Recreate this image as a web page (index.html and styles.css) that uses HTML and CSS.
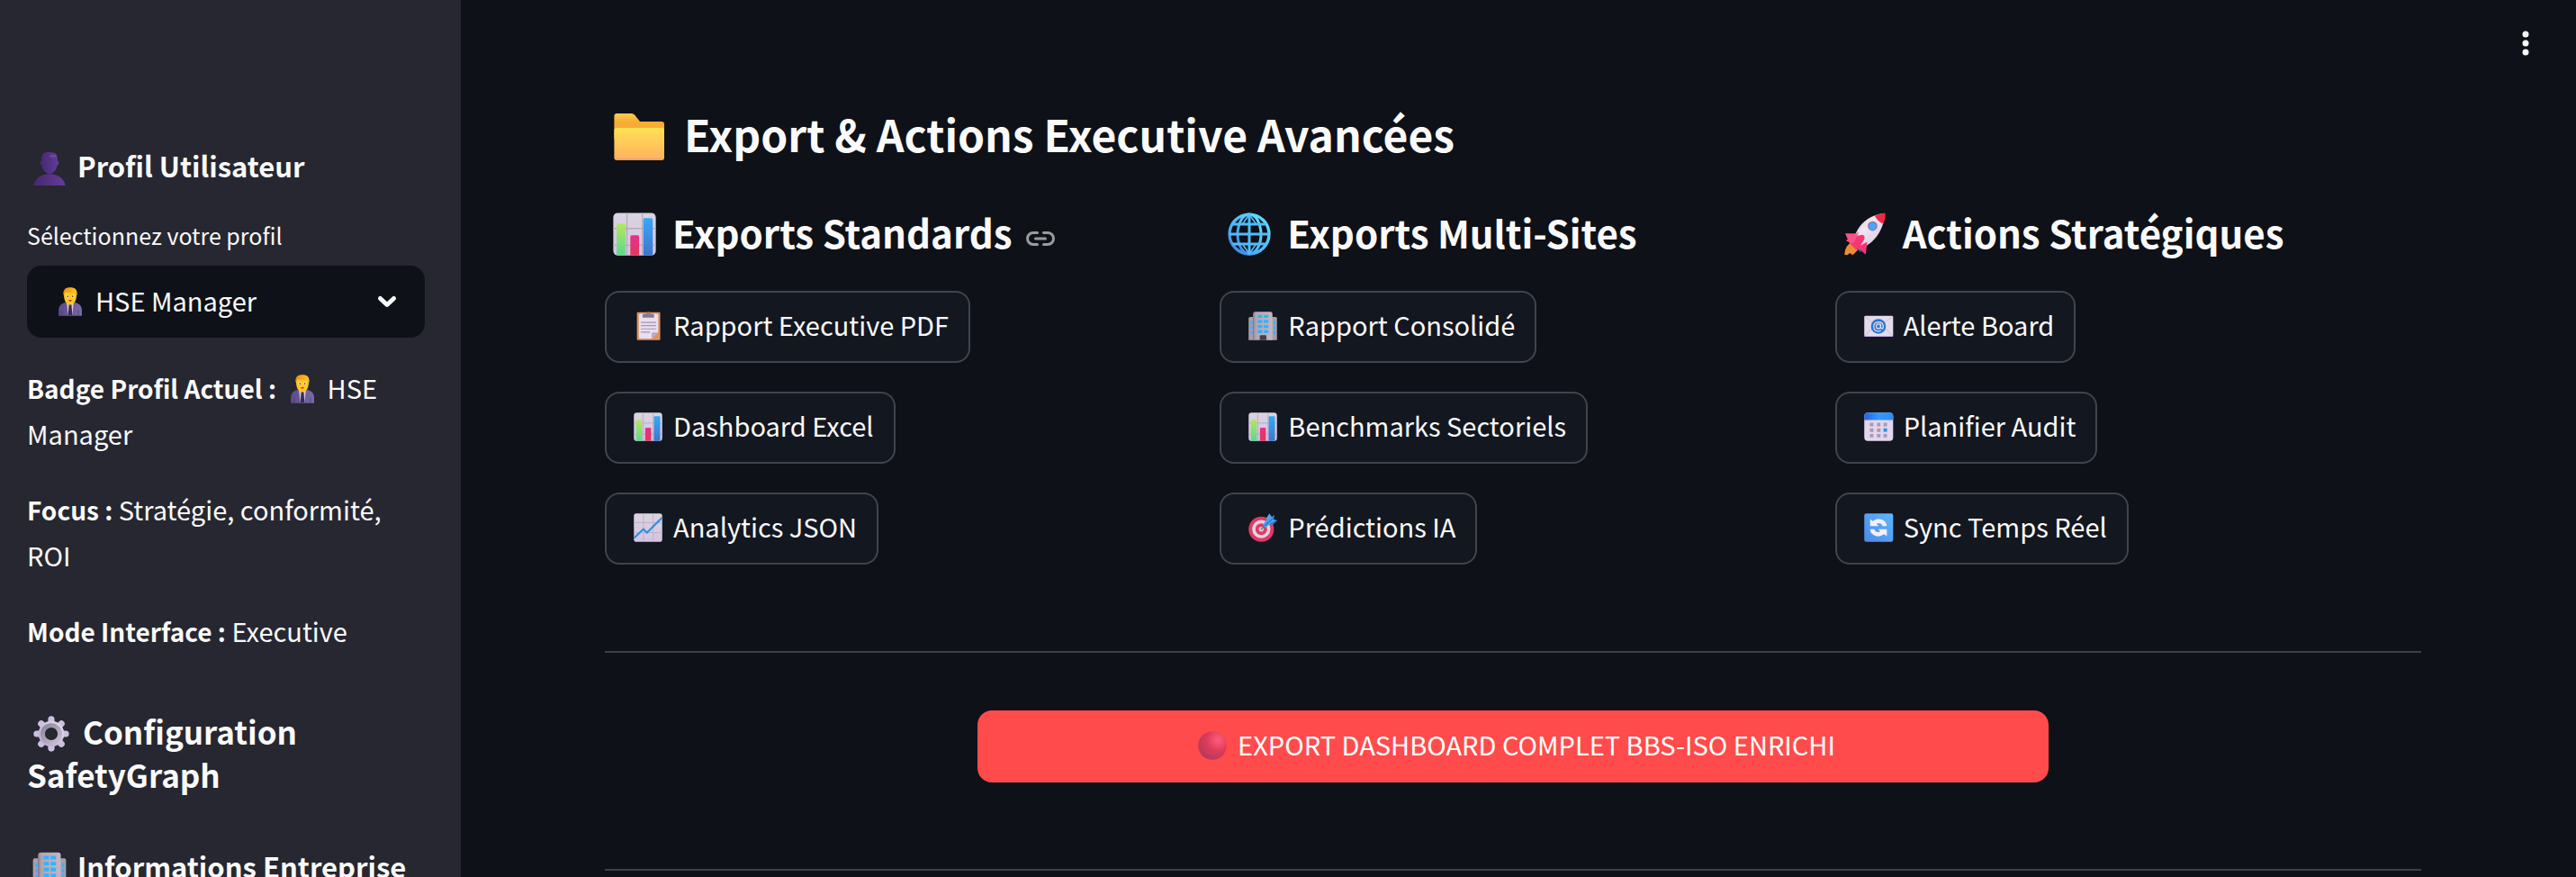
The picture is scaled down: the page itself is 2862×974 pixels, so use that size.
FILE: index.html
```html
<!DOCTYPE html>
<html lang="fr">
<head>
<meta charset="utf-8">
<title>SafetyGraph</title>
<link rel="stylesheet" href="styles.css">
</head>
<body>
<svg class="sprite" aria-hidden="true">
  <defs>
    <linearGradient id="g-person" x1="0" y1="0" x2="1" y2="0"><stop offset="0" stop-color="#46286e"/><stop offset="1" stop-color="#633d98"/></linearGradient>
    <linearGradient id="g-panel" x1="0" y1="0" x2="0" y2="1"><stop offset="0" stop-color="#dad4df"/><stop offset="1" stop-color="#d5c4e6"/></linearGradient>
    <linearGradient id="g-green" x1="0" y1="0" x2="0" y2="1"><stop offset="0" stop-color="#b4e75c"/><stop offset="1" stop-color="#5bd98c"/></linearGradient>
    <linearGradient id="g-pink" x1="0" y1="0" x2="0" y2="1"><stop offset="0" stop-color="#ea2e8c"/><stop offset="1" stop-color="#e03a5c"/></linearGradient>
    <linearGradient id="g-blue" x1="0" y1="0" x2="0" y2="1"><stop offset="0" stop-color="#35a8fa"/><stop offset="1" stop-color="#3f76ca"/></linearGradient>
    <linearGradient id="g-folder-back" x1="0" y1="0" x2="0" y2="1"><stop offset="0" stop-color="#ffcb50"/><stop offset=".35" stop-color="#f8ab35"/></linearGradient>
    <linearGradient id="g-folder" x1="0" y1="0" x2="0" y2="1"><stop offset="0" stop-color="#ffe152"/><stop offset="1" stop-color="#ffb160"/></linearGradient>
    <linearGradient id="g-globe" x1="1" y1="0" x2="0" y2="1"><stop offset="0" stop-color="#62e4ff"/><stop offset=".6" stop-color="#4db5fa"/><stop offset="1" stop-color="#3e7ae0"/></linearGradient>
    <linearGradient id="g-gear" x1="1" y1="0" x2="0" y2="1"><stop offset="0" stop-color="#e0dbe8"/><stop offset="1" stop-color="#bda6d6"/></linearGradient>
    <linearGradient id="g-gear-ring" x1="0" y1="0" x2="1" y2="1"><stop offset="0" stop-color="#8e869a"/><stop offset="1" stop-color="#c9bfd4"/></linearGradient>
    <linearGradient id="g-suit" x1="0" y1="0" x2="1" y2="0"><stop offset="0" stop-color="#5a4a88"/><stop offset="1" stop-color="#7a6aa6"/></linearGradient>
    <linearGradient id="g-hair" x1="0" y1="0" x2="1" y2="0"><stop offset="0" stop-color="#f08c10"/><stop offset="1" stop-color="#ffc32a"/></linearGradient>
    <linearGradient id="g-tower" x1="0" y1="0" x2="1" y2="0"><stop offset="0" stop-color="#9d929f"/><stop offset=".2" stop-color="#b3a8b5"/><stop offset="1" stop-color="#c2b6c6"/></linearGradient>
    <linearGradient id="g-rocket" x1="0" y1="0" x2="1" y2="1"><stop offset="0" stop-color="#c9bdcf"/><stop offset=".4" stop-color="#efe6f0"/><stop offset="1" stop-color="#d2c0de"/></linearGradient>
    <linearGradient id="g-cal" x1="0" y1="0" x2="1" y2="0"><stop offset="0" stop-color="#2b62dc"/><stop offset=".5" stop-color="#3598fa"/><stop offset="1" stop-color="#2f8cf4"/></linearGradient>
    <linearGradient id="g-sync" x1="1" y1="0" x2="0" y2="1"><stop offset="0" stop-color="#5cb8ff"/><stop offset="1" stop-color="#4f88e6"/></linearGradient>
    <radialGradient id="g-ball" cx=".7" cy=".3" r=".8"><stop offset="0" stop-color="#ff5d7e"/><stop offset=".5" stop-color="#de3c58"/><stop offset="1" stop-color="#b03a5c"/></radialGradient>
  </defs>
  <symbol id="person" viewBox="0 0 32 32">
    <path d="M9.300 8C9.300 4 10.800 2.200 16 2.200S22.700 4 22.700 8v1.700c.8 0 1.200.6 1.200 1.700s-.4 1.700-1.300 1.800C21.800 17.500 19.500 20.500 16 20.500s-5.800-3-6.600-7.300c-.9-.1-1.300-.7-1.300-1.800s.4-1.700 1.200-1.700z" fill="url(#g-person)"/>
    <path d="M2.500 30.500C4 24.500 8.500 20.800 16 20.800S28 24.500 29.500 30.500z" fill="url(#g-person)"/>
    <ellipse cx="19" cy="5.500" rx="3" ry="1" fill="#704aa5"/>
  </symbol>
  <symbol id="manager" viewBox="0 0 32 32">
    <path d="M4.500 30v-5c0-6 4-8.500 11.500-8.500S27.500 19 27.500 25v5z" fill="url(#g-suit)"/>
    <path d="M12.500 16.500h7L18 30h-4z" fill="#dccde4"/>
    <path d="M14.800 18.500h2.400l1 11.500h-4.400z" fill="#3a2b57"/>
    <path d="M8 24.500V30m16-5.500V30" stroke="#4c3d78" stroke-width=".7"/>
    <path d="M9.800 9c0-4 2-6 6.200-6s6.200 2 6.200 6c0 5.500-2 10-6.200 10s-6.200-4.500-6.200-10z" fill="#ffc91f"/>
    <path d="M9.200 10C8.800 4 11 2 16 2s7.200 2 6.800 8l-1.500-3.500c-3 .6-7.600.6-10.600 0z" fill="url(#g-hair)"/>
    <circle cx="13.300" cy="10.600" r="1.300" fill="#fff"/><circle cx="18.700" cy="10.600" r="1.300" fill="#fff"/>
    <circle cx="13.500" cy="10.700" r=".8" fill="#53306b"/><circle cx="18.500" cy="10.700" r=".8" fill="#53306b"/>
    <path d="M14.200 14.800q1.800-1 3.600 0-1.800 1.600-3.600 0z" fill="#d4143c"/>
  </symbol>
  <symbol id="gear" viewBox="0 0 32 32">
    <path d="M16 4.800V8M16 24v3.200M4.800 16H8M24 16h3.200M8.200 8.200 10.500 10.500M21.500 21.500l2.300 2.300M23.800 8.200 21.500 10.500M10.500 21.500l-2.300 2.300" stroke="#cdbfe0" stroke-width="5" stroke-linecap="round"/>
    <circle cx="16" cy="16" r="7.700" fill="none" stroke="url(#g-gear)" stroke-width="4.500"/>
    <circle cx="16" cy="16" r="6.600" fill="none" stroke="url(#g-gear-ring)" stroke-width="3.300"/>
  </symbol>
  <symbol id="building" viewBox="0 0 32 32">
    <path d="M2 30V8.500q0-1.500 1.500-1.500H8v23zM24 30V7h4.500Q30 7 30 8.500V30z" fill="#a99dac"/>
    <path d="M6.500 30V4q0-2 2-2h15q2 0 2 2v26z" fill="url(#g-tower)"/>
    <path d="M6.700 30V4" stroke="#85788c"/>
    <g fill="#33b4fa"><path d="M11 5h4.500v3H11zM17 5h4.500v3H17zM11 10h4.500v3H11zM17 10h4.500v3H17zM11 15h4.500v3H11zM17 15h4.500v3H17zM11 20h4.500v3H11zM17 20h4.500v3H17zM4 11h2v3H4zM4 16h2v3H4zM4 21h2v3H4zM26.500 11h2v3h-2zM26.500 16h2v3h-2zM26.500 21h2v3h-2z"/></g>
    <path d="M13 30v-4q0-1 1-1h4.500q1 0 1 1v4z" fill="#4a3b52"/>
  </symbol>
  <symbol id="folder" viewBox="0 0 32 32">
    <path d="M2.200 4.500Q2.200 3 3.700 3h8.100q1 0 1.700.8l3 3.700h12q1.500 0 1.500 1.500v8H2.200z" fill="url(#g-folder-back)"/>
    <path d="M2.200 12.500q0-1.500 1.500-1.500h24.800q1.500 0 1.500 1.500v15q0 1.500-1.500 1.500H3.700q-1.500 0-1.500-1.500z" fill="url(#g-folder)"/>
    <path d="M3 28.500h26" stroke="#ef9870" stroke-width=".8"/>
  </symbol>
  <symbol id="bars" viewBox="0 0 32 32">
    <rect x="2" y="2" width="28" height="28" rx="3" fill="url(#g-panel)"/>
    <path d="M11 2v28M21.200 2v28M2 12.300h28M2 23.300h28" stroke="#b5acba" stroke-width=".8"/>
    <path d="M4.200 30V10q0-1 1-1H9q1 0 1 1v20z" fill="url(#g-green)"/>
    <path d="M13.200 30V17.800q0-1 1-1H18q1 0 1 1V30z" fill="url(#g-pink)"/>
    <path d="M21.800 30V6.500q0-1 1-1H27q1 0 1 1V30z" fill="url(#g-blue)"/>
  </symbol>
  <symbol id="trend" viewBox="0 0 32 32">
    <rect x="2" y="2" width="28" height="28" rx="2.500" fill="url(#g-panel)"/>
    <path d="M11.500 2v28M21 2v28M2 11h28M2 21h28" stroke="#bab0c0" stroke-width=".8"/>
    <path d="M2 26.500 11.300 17.500 15 21 30 6" fill="none" stroke="#2e8fe0" stroke-width="1.900"/>
  </symbol>
  <symbol id="clipboard" viewBox="0 0 32 32">
    <rect x="5" y="2.500" width="23" height="27.500" rx="1" fill="#dd9560"/>
    <path d="M7 5.500Q7 4 8.500 4h16Q26 4 26 5.500V22l-6.500 6.500h-11Q7 28.500 7 27z" fill="#e8dff1"/>
    <path d="M26 22.500h-5q-1.500 0-1.500 1.500v4.500z" fill="#bda9c4"/>
    <path d="M9 12.500h15M9 15.700h15M9 18.900h15M9 22.100h9" stroke="#a297aa" stroke-width="1"/>
    <path d="M10.500 7.800V5.500q0-1.500 1.500-1.500h2.300q.2-2.300 2-2.300t2 2.300h2.200Q22 4 22 5.500v2.300z" fill="#867a8d"/>
    <circle cx="16.300" cy="4" r=".8" fill="#c07f52"/>
  </symbol>
  <symbol id="globe" viewBox="0 0 32 32">
    <g fill="none" stroke="url(#g-globe)" stroke-width="1.800">
      <circle cx="16" cy="16" r="13" stroke-width="2"/>
      <ellipse cx="16" cy="16" rx="7.700" ry="13"/>
      <g stroke="#50bdfb">
        <path d="M5 9.500h22M3 16h26M5 22.500h22M16 3v26"/>
        <path d="M16 3 11.500 9.500M16 3l4.500 6.500M16 29l-4.500-6.500M16 29l4.500-6.500" stroke-width="1"/>
      </g>
    </g>
  </symbol>
  <symbol id="target" viewBox="0 0 32 32">
    <circle cx="14.500" cy="17.500" r="12.500" fill="#e23960"/>
    <circle cx="14.500" cy="17.500" r="9" fill="#e0d3e8"/>
    <circle cx="14.500" cy="17.500" r="5.800" fill="#e23960"/>
    <circle cx="14.500" cy="17.500" r="2.500" fill="#d7bfd6"/>
    <path d="M14.500 17.500 23 9" stroke="#75708a" stroke-width="1.300"/>
    <path d="M16 13 20 8 19.500 6.500 22.500 2 25 5.500 27.500 3.500 26.500 7.500 30 9 25.500 13 23.500 12.500 18.500 16z" fill="#43a8f2"/>
    <path d="M18 14 27 6M23.500 12.500 27 10.500 30 9" stroke="#2c72d4" stroke-width="1.200" fill="none"/>
  </symbol>
  <symbol id="rocket" viewBox="0 0 32 32">
    <path d="M7.500 21.500Q3 23 2.500 29.500l2 .3 1.500-1.300 2 1.300 5-5z" fill="#ef8b32"/>
    <path d="M7 22.500 13 28l2-2-6-6z" fill="#3a4a94"/>
    <path d="M11.500 15.500 3 15.500 6 18 3.500 20.500 8 22z" fill="#fa4f86"/>
    <path d="M8 22C10 11 17 3.500 29 2.200 28.500 14 22 22 12.500 26z" fill="url(#g-rocket)"/>
    <path d="M22.500 4Q26 2.200 28.500 2.200q1 0 1 1.200-.2 3.200-1.400 5.800Q24.500 8 22.500 4z" fill="#ee2a46"/>
    <path d="M6.500 22.500Q8 16.500 14.500 16.500 16.300 17 15.500 19.500L13 23.500 17.500 21 16.500 29.500 12 25.500 10 26z" fill="#f63674"/>
    <path d="M3 15.500 8.500 17 12 14.500 9 21.500 6 22.500z" fill="#fb5288"/>
    <circle cx="21" cy="10.700" r="3.200" fill="#8a7a92"/>
    <circle cx="21" cy="10.900" r="2.400" fill="#4aa4fa"/>
  </symbol>
  <symbol id="email" viewBox="0 0 32 32">
    <rect x="2" y="6" width="28.500" height="20.500" rx="1" fill="#e4dcec"/>
    <path d="M2.500 26 12 16M30 26l-9.500-10M2.500 6.500 11 13.500M30 6.500 21.500 13.500" stroke="#c3b5d4" stroke-width=".7"/>
    <path d="M2.500 26.200h27.500" stroke="#cdabef" stroke-width=".7"/>
    <circle cx="16" cy="16.400" r="7.400" fill="#2e76cf"/>
    <g fill="none" stroke="#dfe3f5" stroke-width="1.100"><circle cx="16" cy="16.400" r="2.200"/><path d="M18.200 14v3.200q0 1.500 1.300 1.500t1.300-2.300q-.4-4.300-4.800-4.300-4.500.2-4.700 4.500.2 4.300 4.700 4.600 1.500 0 2.500-.6"/></g>
  </symbol>
  <symbol id="calendar" viewBox="0 0 32 32">
    <rect x="2" y="2" width="28.500" height="28" rx="3.500" fill="#e3d6ee"/>
    <path d="M2 9.300V5.500Q2 2 5.500 2H27q3.500 0 3.500 3.500v3.800z" fill="url(#g-cal)"/>
    <path d="M7.500 12H11v3.500H7.500zM14.500 12H18v3.500h-3.500zM21 12h3.500v3.500H21zM7.500 17.500H11V21H7.500zM14.500 17.500H18V21h-3.500zM7.500 23H11v3.500H7.500zM14.500 23H18v3.500h-3.500zM21 23h3.500v3.500H21z" fill="#a99caf"/>
    <path d="M21 17.500h3.500V21H21z" fill="#2692f2"/>
  </symbol>
  <symbol id="sync" viewBox="0 0 32 32">
    <rect x="2" y="2" width="28.500" height="28" rx="2" fill="url(#g-sync)"/>
    <path d="M7.800 7.500 10.500 9.500Q17 5 22.500 10q1.500 1.800 1.700 4.500h-4.100q-1.600-4.200-6-2.300l2.200 2.300H7.800zM24.300 24.500l-2.700-2Q15 27 9.500 22q-1.500-1.800-1.700-4.500h4.100q1.600 4.200 6 2.300l-2.200-2.300h8.600z" fill="#f4eefc"/>
  </symbol>
  <symbol id="ball" viewBox="0 0 32 32"><circle cx="16" cy="16" r="14" fill="url(#g-ball)"/></symbol>
</svg>

<div class="app">
  <aside class="sidebar">
    <h3 class="side-title"><svg class="emoji"><use href="#person"/></svg>Profil Utilisateur</h3>
    <label class="field-label" for="profil">Sélectionnez votre profil</label>
    <div class="select-box">
      <select id="profil" class="select"><option>HSE Manager</option></select>
      <svg class="emoji select-emoji"><use href="#manager"/></svg>
      <svg class="chevron" viewBox="0 0 24 16" aria-hidden="true"><path d="M4.500 4.500 12 11.500l7.500-7"/></svg>
    </div>
    <div class="profile">
      <p><strong>Badge Profil Actuel :</strong> <svg class="emoji"><use href="#manager"/></svg>HSE Manager</p>
      <p><strong>Focus :</strong> Stratégie, conformité, ROI</p>
      <p><strong>Mode Interface :</strong> Executive</p>
    </div>
    <h2 class="side-heading"><svg class="emoji"><use href="#gear"/></svg>Configuration SafetyGraph</h2>
    <h3 class="side-title"><svg class="emoji"><use href="#building"/></svg>Informations Entreprise</h3>
  </aside>

  <main class="main">
    <header class="toolbar">
      <button class="kebab" type="button" aria-label="Menu principal">
        <svg viewBox="0 0 40 40"><circle cx="20" cy="10" r="3.500"/><circle cx="20" cy="20" r="3.500"/><circle cx="20" cy="30" r="3.500"/></svg>
      </button>
    </header>
    <div class="content">
      <h1 class="title"><svg class="emoji"><use href="#folder"/></svg>Export &amp; Actions Executive Avancées</h1>
      <div class="columns">
        <section class="column">
          <h2 class="heading"><svg class="emoji"><use href="#bars"/></svg>Exports Standards<a class="anchor" href="#exports-standards" aria-label="Lien vers la section"><svg viewBox="0 0 34 20"><path d="M13.500 3.500H9a6.500 6.500 0 0 0 0 13h4.500M20.500 3.500H25a6.500 6.500 0 0 1 0 13h-4.500M11.500 10h11"/></svg></a></h2>
          <div class="actions">
            <button class="btn" type="button"><svg class="emoji"><use href="#clipboard"/></svg>Rapport Executive PDF</button>
            <button class="btn" type="button"><svg class="emoji"><use href="#bars"/></svg>Dashboard Excel</button>
            <button class="btn" type="button"><svg class="emoji"><use href="#trend"/></svg>Analytics JSON</button>
          </div>
        </section>
        <section class="column">
          <h2 class="heading"><svg class="emoji"><use href="#globe"/></svg>Exports Multi-Sites</h2>
          <div class="actions">
            <button class="btn" type="button"><svg class="emoji"><use href="#building"/></svg>Rapport Consolidé</button>
            <button class="btn" type="button"><svg class="emoji"><use href="#bars"/></svg>Benchmarks Sectoriels</button>
            <button class="btn" type="button"><svg class="emoji"><use href="#target"/></svg>Prédictions IA</button>
          </div>
        </section>
        <section class="column">
          <h2 class="heading"><svg class="emoji"><use href="#rocket"/></svg>Actions Stratégiques</h2>
          <div class="actions">
            <button class="btn" type="button"><svg class="emoji"><use href="#email"/></svg>Alerte Board</button>
            <button class="btn" type="button"><svg class="emoji"><use href="#calendar"/></svg>Planifier Audit</button>
            <button class="btn" type="button"><svg class="emoji"><use href="#sync"/></svg>Sync Temps Réel</button>
          </div>
        </section>
      </div>
      <hr class="rule">
      <div class="export-row">
        <button class="btn btn-primary" type="button"><svg class="emoji"><use href="#ball"/></svg>EXPORT DASHBOARD COMPLET BBS-ISO ENRICHI</button>
      </div>
      <hr class="rule">
    </div>
  </main>
</div>
</body>
</html>
```
FILE: styles.css
```css
* { box-sizing: border-box; }

body {
  margin: 0;
  background: #0e1117;
  color: #fafafa;
  font-family: "Noto Sans CJK SC", "Noto Sans", sans-serif;
  font-size: 29px;
  line-height: 51px;
}

h1, h2, h3, p { margin: 0; }
h1, h2, h3 { font-weight: 600; }
strong { font-size: 28px; font-weight: 600; line-height: 1; }

.sprite { position: absolute; width: 0; height: 0; }

.app {
  display: grid;
  grid-template-columns: 512px 1fr;
  height: 100vh;
  overflow: hidden;
}

/* Emoji */
.emoji {
  display: inline-block;
  flex: none;
  width: 36px;
  height: 36px;
  margin: 0 10px 0 4px;
  vertical-align: -7px;
}

/* Sidebar */
.sidebar {
  height: 100vh;
  overflow: hidden;
  padding: 162px 40px 0 30px;
  background: #262730;
}

.side-title {
  font-size: 31px;
  line-height: 43px;
  white-space: nowrap;
}
.side-title .emoji {
  width: 42px;
  height: 42px;
  margin: -4px 10px -4px 4px;
}

.field-label {
  display: block;
  margin-top: 40px;
  font-size: 25px;
  line-height: 32px;
}

.select-box {
  display: grid;
  grid-template-columns: 100%;
  align-items: center;
  margin-top: 18px;
}
.select-box > * { grid-area: 1 / 1; }

.select {
  appearance: none;
  width: 100%;
  height: 80px;
  padding: 0 56px 4px 76px;
  border: 0;
  border-radius: 16px;
  background: #0e1117;
  color: inherit;
  font: inherit;
}
.select-emoji { margin-left: 30px; pointer-events: none; }
.chevron {
  justify-self: end;
  width: 24px;
  height: 16px;
  margin-right: 30px;
  fill: none;
  stroke: #fafafa;
  stroke-width: 5;
  stroke-linecap: round;
  stroke-linejoin: round;
  pointer-events: none;
}

.profile {
  display: grid;
  gap: 33px;
  margin-top: 30px;
}

.side-heading {
  margin: 62px 0 56px;
  font-size: 35px;
  line-height: 48px;
}
.side-heading .emoji {
  width: 46px;
  height: 46px;
  margin: -4px 12px -4px 4px;
}

/* Main area */
.toolbar {
  display: flex;
  align-items: center;
  justify-content: flex-end;
  height: 96px;
  padding-right: 36px;
}
.kebab {
  width: 40px;
  height: 40px;
  padding: 0;
  border: 0;
  background: none;
}
.kebab svg { display: block; fill: #fafafa; }

.content { padding: 18px 172px 0 160px; }

.title {
  display: flex;
  align-items: center;
  font-size: 48px;
  line-height: 68px;
}
.title .emoji {
  width: 64px;
  height: 64px;
  margin: 4px 18px -4px 6px;
}

.columns {
  display: grid;
  grid-template-columns: repeat(3, 1fr);
  gap: 32px;
  margin-top: 47px;
}

.heading {
  display: flex;
  align-items: center;
  font-size: 42px;
  line-height: 58px;
}
.heading .emoji {
  width: 54px;
  height: 54px;
  margin: 2px 15px -2px 6px;
}
.anchor { margin: 14px 0 0 14px; line-height: 0; }
.anchor svg {
  width: 34px;
  height: 20px;
  fill: none;
  stroke: #9a9b9e;
  stroke-width: 3;
  stroke-linecap: round;
}

.actions {
  display: flex;
  flex-direction: column;
  align-items: flex-start;
  gap: 32px;
  margin-top: 36px;
}

.btn {
  display: flex;
  align-items: center;
  justify-content: center;
  height: 80px;
  padding: 0 22px 6px 24px;
  border: 2px solid #41444c;
  border-radius: 16px;
  background: #131720;
  color: inherit;
  font: inherit;
  white-space: nowrap;
}
.btn .emoji { margin: 2px 10px -2px 4px; }

.btn-primary {
  border-color: #ff4b4b;
  background: #ff4b4b;
  color: #ffffff;
}

.rule {
  height: 2px;
  margin: 96px 0 0;
  border: 0;
  background: #3d4044;
}

.export-row {
  display: grid;
  grid-template-columns: 382fr 1190fr 382fr;
  gap: 32px;
  margin-top: 64px;
}
.export-row .btn { grid-column: 2; }
```
